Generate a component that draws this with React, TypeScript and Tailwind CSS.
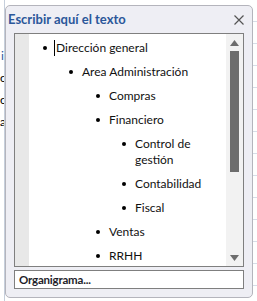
import React from "react";

const items: { t: string; l: number }[] = [
  { t: "Dirección general", l: 0 },
  { t: "Area Administración", l: 1 },
  { t: "Compras", l: 2 },
  { t: "Financiero", l: 2 },
  { t: "Control de gestión", l: 3 },
  { t: "Contabilidad", l: 3 },
  { t: "Fiscal", l: 3 },
  { t: "Ventas", l: 2 },
  { t: "RRHH", l: 2 },
];

const indent = ["pl-[14px]", "pl-[40px]", "pl-[67px]", "pl-[93px]"];

export default function App() {
  return (
    <div
      className="relative w-[257px] h-[301px] overflow-hidden bg-white bg-[repeating-linear-gradient(to_bottom,transparent_0,transparent_21px,#d7dde8_21px,#d7dde8_22px)]"
      style={{ fontFamily: 'Lato, "Noto Sans", sans-serif' }}
    >
      {/* spreadsheet fragments behind the pane */}
      <div className="w-[5px] h-full border-r border-[#c6cfdc] bg-white flex flex-col items-start pt-[48px] gap-[6px] overflow-hidden">
        <span className="text-[12px] leading-[16px] text-[#2b579a] pl-[1px]">i</span>
        <span className="text-[12px] leading-[16px] text-black">c</span>
        <span className="text-[12px] leading-[16px] text-black">c</span>
        <span className="text-[12px] leading-[16px] text-black">a</span>
      </div>

      {/* floating pane */}
      <div className="absolute left-[5px] top-[5px] w-[248px] h-[293px] rounded-[5px] border border-[#b4b4bc] bg-[#eeeef4] flex flex-col">
        <div className="flex items-center justify-between h-[27px] pl-[2px] pr-[8px]">
          <span className="text-[13px] font-bold text-[#2b579a] leading-none">
            Escribir aquí el texto
          </span>
          <svg width="10" height="10" viewBox="0 0 10 10" className="mt-[1px]">
            <path d="M0.5 0.5 L9.5 9.5 M9.5 0.5 L0.5 9.5" stroke="#555" strokeWidth="1.2" />
          </svg>
        </div>
        <div className="mx-[8px] h-[234px] border border-[#7f7f7f] bg-white flex overflow-hidden">
          <div className="w-[14px] bg-[#e8e8e8] shrink-0" />
          <div className="flex-1 pt-[6px] flex flex-col gap-[8px] overflow-hidden">
            {items.map((it, i) => (
              <div key={i} className={`flex ${indent[it.l]} pr-[4px]`}>
                <span className="h-[16px] w-[13px] shrink-0 flex items-center">
                  <span className="w-[4px] h-[4px] rounded-full bg-black" />
                </span>
                <span className="flex text-[12px] leading-[16px] text-[#111]">
                  {i === 0 && <span className="w-px h-[16px] bg-black -ml-[2px] mr-[1px]" />}
                  <span>{it.t}</span>
                </span>
              </div>
            ))}
          </div>
          <div className="w-[17px] shrink-0 bg-[#f2f2f2] flex flex-col items-center">
            <div className="h-[17px] flex items-center justify-center">
              <svg width="9" height="6" viewBox="0 0 9 6">
                <path d="M4.5 0 L9 6 L0 6 Z" fill="#6d6d6d" />
              </svg>
            </div>
            <div className="w-[9px] h-[121px] bg-[#6d6d6d]" />
            <div className="flex-1" />
            <div className="h-[17px] flex items-center justify-center">
              <svg width="9" height="6" viewBox="0 0 9 6">
                <path d="M0 0 L9 0 L4.5 6 Z" fill="#6d6d6d" />
              </svg>
            </div>
          </div>
        </div>
        <div className="mx-[8px] mt-[3px] h-[19px] border border-[#7f7f7f] bg-white flex items-center pl-[4px]">
          <span className="text-[11.5px] font-bold tracking-[-0.2px] text-[#1e1e2a] leading-none">Organigrama...</span>
        </div>
      </div>
    </div>
  );
}
